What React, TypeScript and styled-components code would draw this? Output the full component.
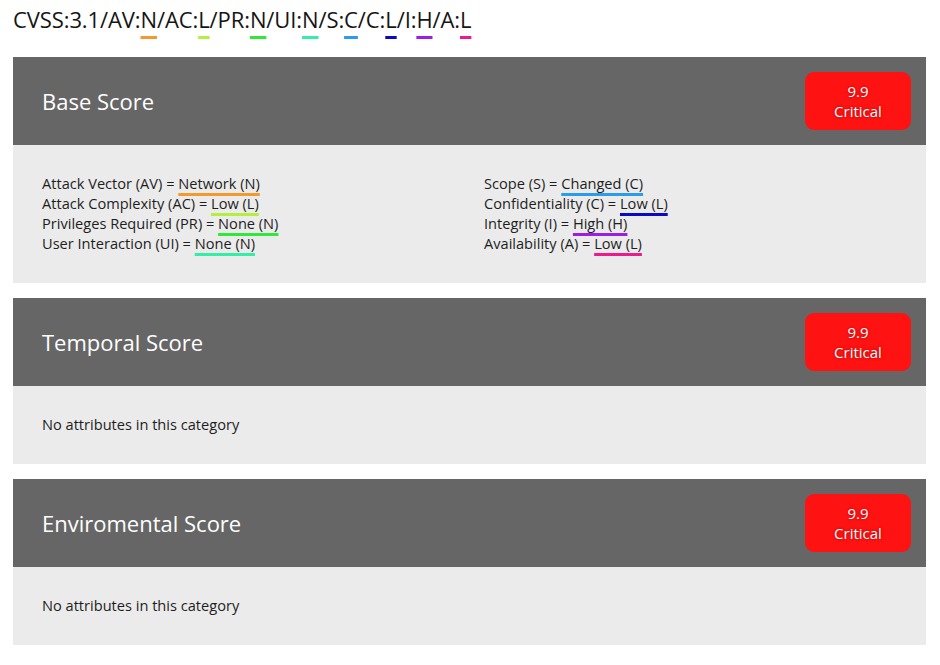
import React from 'react'
import styled, { createGlobalStyle } from 'styled-components'

const GlobalStyle = createGlobalStyle`
body {
  margin: 0;
  background: #ffffff;
  font-family: "Open Sans", "Noto Sans", sans-serif;
  color: #1e1e1e;
}
`

type Metric = { key: string; value: string; color: string }

const vector: Metric[] = [
  { key: 'AV', value: 'N', color: '#f39a2e' },
  { key: 'AC', value: 'L', color: '#b3ef3c' },
  { key: 'PR', value: 'N', color: '#2fe83a' },
  { key: 'UI', value: 'N', color: '#35eea6' },
  { key: 'S', value: 'C', color: '#2b9cec' },
  { key: 'C', value: 'L', color: '#0a0ac4' },
  { key: 'I', value: 'H', color: '#9b1de6' },
  { key: 'A', value: 'L', color: '#ee1a8c' },
]

const leftRows = [
  { label: 'Attack Vector (AV) = ', value: 'Network (N)', color: '#f39a2e' },
  { label: 'Attack Complexity (AC) = ', value: 'Low (L)', color: '#b3ef3c' },
  { label: 'Privileges Required (PR) = ', value: 'None (N)', color: '#2fe83a' },
  { label: 'User Interaction (UI) = ', value: 'None (N)', color: '#35eea6' },
]

const rightRows = [
  { label: 'Scope (S) = ', value: 'Changed (C)', color: '#2b9cec' },
  { label: 'Confidentiality (C) = ', value: 'Low (L)', color: '#0a0ac4' },
  { label: 'Integrity (I) = ', value: 'High (H)', color: '#9b1de6' },
  { label: 'Availability (A) = ', value: 'Low (L)', color: '#ee1a8c' },
]

const Section = ({ title, children }: { title: string; children: React.ReactNode }) => (
  <Panel>
    <Header>
      <Title>{title}</Title>
      <Badge>
        <span>9.9</span>
        <span>Critical</span>
      </Badge>
    </Header>
    <Body>{children}</Body>
  </Panel>
)

const App = () => {
  return (
    <Page>
      <GlobalStyle />
      <VectorLine>
        CVSS:3.1
        {vector.map((m) => (
          <React.Fragment key={m.key}>
            /{m.key}:<Mark color={m.color}>{m.value}</Mark>
          </React.Fragment>
        ))}
      </VectorLine>

      <Section title="Base Score">
        <Columns>
          <Column>
            {leftRows.map((r) => (
              <Row key={r.label}>
                {r.label}
                <Value color={r.color}>{r.value}</Value>
              </Row>
            ))}
          </Column>
          <Column>
            {rightRows.map((r) => (
              <Row key={r.label}>
                {r.label}
                <Value color={r.color}>{r.value}</Value>
              </Row>
            ))}
          </Column>
        </Columns>
      </Section>

      <Section title="Temporal Score">
        <Row>No attributes in this category</Row>
      </Section>

      <Section title="Enviromental Score">
        <Row>No attributes in this category</Row>
      </Section>
    </Page>
  )
}

export default App

const Page = styled.div`
width: 940px;
padding: 4px 14px 0 13px;
box-sizing: border-box;
display: flex;
flex-direction: column;
gap: 15px;
`
const VectorLine = styled.div`
font-size: 22px;
line-height: 30px;
height: 38px;
color: #151515;
letter-spacing: -0.1px;
`
const Mark = styled.span<{ color: string }>`
text-decoration: underline;
text-decoration-color: ${(p) => p.color};
text-decoration-thickness: 3px;
text-underline-offset: 8px;
`
const Panel = styled.div`
display: flex;
flex-direction: column;
`
const Header = styled.div`
height: 88px;
background-color: #666666;
display: flex;
align-items: center;
justify-content: space-between;
padding: 0 15px 0 29px;
`
const Title = styled.div`
color: #ffffff;
font-size: 22px;
font-weight: 400;
`
const Badge = styled.div`
width: 106px;
height: 58px;
border-radius: 9px;
background-color: #ff1212;
color: #ffffff;
display: flex;
flex-direction: column;
align-items: center;
justify-content: center;
font-size: 15px;
line-height: 20px;
text-shadow: 0 0 3px rgba(90, 0, 0, 0.6);
`
const Body = styled.div`
background-color: #ebebeb;
padding: 28px 29px 30px;
font-size: 14.6px;
line-height: 20px;
color: #1e1e1e;
`
const Columns = styled.div`
display: grid;
grid-template-columns: 442px 1fr;
`
const Column = styled.div`
display: flex;
flex-direction: column;
`
const Row = styled.div`
white-space: nowrap;
`
const Value = styled.span<{ color: string }>`
text-decoration: underline;
text-decoration-color: ${(p) => p.color};
text-decoration-thickness: 3px;
text-underline-offset: 4px;
`
